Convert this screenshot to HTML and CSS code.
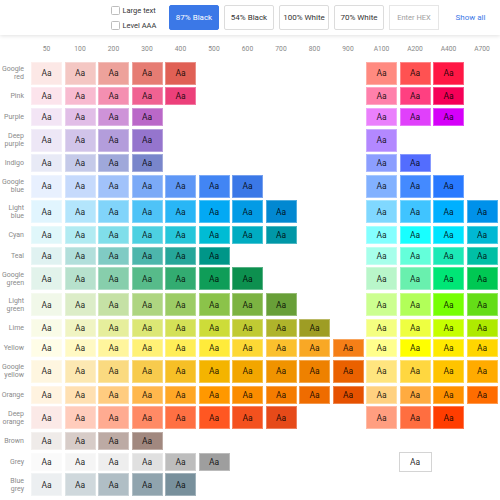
FILE: index.html
```html
<!DOCTYPE html>
<html>
  <head>
    <title>Color Tool</title>
    <link rel="stylesheet" href="styles.css">
  </head>

  <body>
    <div id="toolbar">
      <div class="checks">
        <label class="check"><span class="box"></span>Large text</label>
        <label class="check"><span class="box"></span>Level AAA</label>
      </div>
      <button class="btn active" type="button">87% Black</button>
      <button class="btn" type="button">54% Black</button>
      <button class="btn" type="button">100% White</button>
      <button class="btn" type="button">70% White</button>
      <div class="hex">Enter HEX</div>
      <a class="show-all" href="#">Show all</a>
    </div>

    <div id="palette">
      <div class="row head">
        <div></div>
        <div>50</div><div>100</div><div>200</div><div>300</div><div>400</div><div>500</div><div>600</div>
        <div>700</div><div>800</div><div>900</div><div>A100</div><div>A200</div><div>A400</div><div>A700</div>
      </div>

      <div class="row tall">
        <div class="name">Google<br>red</div>
        <div class="sw" style="background:#fce8e6">Aa</div>
        <div class="sw" style="background:#f4c7c3">Aa</div>
        <div class="sw" style="background:#eda29b">Aa</div>
        <div class="sw" style="background:#e67c73">Aa</div>
        <div class="sw" style="background:#e06055">Aa</div>
        <div class="sw a100" style="background:#ff8a80">Aa</div>
        <div class="sw" style="background:#ff5252">Aa</div>
        <div class="sw" style="background:#ff1744">Aa</div>
      </div>

      <div class="row">
        <div class="name">Pink</div>
        <div class="sw" style="background:#fce4ec">Aa</div>
        <div class="sw" style="background:#f8bbd0">Aa</div>
        <div class="sw" style="background:#f48fb1">Aa</div>
        <div class="sw" style="background:#f06292">Aa</div>
        <div class="sw" style="background:#ec407a">Aa</div>
        <div class="sw a100" style="background:#ff80ab">Aa</div>
        <div class="sw" style="background:#ff4081">Aa</div>
        <div class="sw" style="background:#f50057">Aa</div>
      </div>

      <div class="row">
        <div class="name">Purple</div>
        <div class="sw" style="background:#f3e5f5">Aa</div>
        <div class="sw" style="background:#e1bee7">Aa</div>
        <div class="sw" style="background:#ce93d8">Aa</div>
        <div class="sw" style="background:#ba68c8">Aa</div>
        <div class="sw a100" style="background:#ea80fc">Aa</div>
        <div class="sw" style="background:#e040fb">Aa</div>
        <div class="sw" style="background:#d500f9">Aa</div>
      </div>

      <div class="row tall">
        <div class="name">Deep<br>purple</div>
        <div class="sw" style="background:#ede7f6">Aa</div>
        <div class="sw" style="background:#d1c4e9">Aa</div>
        <div class="sw" style="background:#b39ddb">Aa</div>
        <div class="sw" style="background:#9575cd">Aa</div>
        <div class="sw a100" style="background:#b388ff">Aa</div>
      </div>

      <div class="row">
        <div class="name">Indigo</div>
        <div class="sw" style="background:#e8eaf6">Aa</div>
        <div class="sw" style="background:#c5cae9">Aa</div>
        <div class="sw" style="background:#9fa8da">Aa</div>
        <div class="sw" style="background:#7986cb">Aa</div>
        <div class="sw a100" style="background:#8c9eff">Aa</div>
        <div class="sw" style="background:#536dfe">Aa</div>
      </div>

      <div class="row tall">
        <div class="name">Google<br>blue</div>
        <div class="sw" style="background:#e8f0fe">Aa</div>
        <div class="sw" style="background:#c6dafc">Aa</div>
        <div class="sw" style="background:#a1c2fa">Aa</div>
        <div class="sw" style="background:#7baaf7">Aa</div>
        <div class="sw" style="background:#5e97f6">Aa</div>
        <div class="sw" style="background:#4285f4">Aa</div>
        <div class="sw" style="background:#3b78e7">Aa</div>
        <div class="sw a100" style="background:#82b1ff">Aa</div>
        <div class="sw" style="background:#448aff">Aa</div>
        <div class="sw" style="background:#2979ff">Aa</div>
      </div>

      <div class="row tall">
        <div class="name">Light<br>blue</div>
        <div class="sw" style="background:#e1f5fe">Aa</div>
        <div class="sw" style="background:#b3e5fc">Aa</div>
        <div class="sw" style="background:#81d4fa">Aa</div>
        <div class="sw" style="background:#4fc3f7">Aa</div>
        <div class="sw" style="background:#29b6f6">Aa</div>
        <div class="sw" style="background:#03a9f4">Aa</div>
        <div class="sw" style="background:#039be5">Aa</div>
        <div class="sw" style="background:#0288d1">Aa</div>
        <div class="sw a100" style="background:#80d8ff">Aa</div>
        <div class="sw" style="background:#40c4ff">Aa</div>
        <div class="sw" style="background:#00b0ff">Aa</div>
        <div class="sw" style="background:#0091ea">Aa</div>
      </div>

      <div class="row">
        <div class="name">Cyan</div>
        <div class="sw" style="background:#e0f7fa">Aa</div>
        <div class="sw" style="background:#b2ebf2">Aa</div>
        <div class="sw" style="background:#80deea">Aa</div>
        <div class="sw" style="background:#4dd0e1">Aa</div>
        <div class="sw" style="background:#26c6da">Aa</div>
        <div class="sw" style="background:#00bcd4">Aa</div>
        <div class="sw" style="background:#00acc1">Aa</div>
        <div class="sw" style="background:#0097a7">Aa</div>
        <div class="sw a100" style="background:#84ffff">Aa</div>
        <div class="sw" style="background:#18ffff">Aa</div>
        <div class="sw" style="background:#00e5ff">Aa</div>
        <div class="sw" style="background:#00b8d4">Aa</div>
      </div>

      <div class="row">
        <div class="name">Teal</div>
        <div class="sw" style="background:#e0f2f1">Aa</div>
        <div class="sw" style="background:#b2dfdb">Aa</div>
        <div class="sw" style="background:#80cbc4">Aa</div>
        <div class="sw" style="background:#4db6ac">Aa</div>
        <div class="sw" style="background:#26a69a">Aa</div>
        <div class="sw" style="background:#009688">Aa</div>
        <div class="sw a100" style="background:#a7ffeb">Aa</div>
        <div class="sw" style="background:#64ffda">Aa</div>
        <div class="sw" style="background:#1de9b6">Aa</div>
        <div class="sw" style="background:#00bfa5">Aa</div>
      </div>

      <div class="row tall">
        <div class="name">Google<br>green</div>
        <div class="sw" style="background:#e2f3eb">Aa</div>
        <div class="sw" style="background:#b7e1cd">Aa</div>
        <div class="sw" style="background:#87ceac">Aa</div>
        <div class="sw" style="background:#57bb8a">Aa</div>
        <div class="sw" style="background:#33ac71">Aa</div>
        <div class="sw" style="background:#0f9d58">Aa</div>
        <div class="sw" style="background:#0d904f">Aa</div>
        <div class="sw a100" style="background:#b9f6ca">Aa</div>
        <div class="sw" style="background:#69f0ae">Aa</div>
        <div class="sw" style="background:#00e676">Aa</div>
        <div class="sw" style="background:#00c853">Aa</div>
      </div>

      <div class="row tall">
        <div class="name">Light<br>green</div>
        <div class="sw" style="background:#f1f8e9">Aa</div>
        <div class="sw" style="background:#dcedc8">Aa</div>
        <div class="sw" style="background:#c5e1a5">Aa</div>
        <div class="sw" style="background:#aed581">Aa</div>
        <div class="sw" style="background:#9ccc65">Aa</div>
        <div class="sw" style="background:#8bc34a">Aa</div>
        <div class="sw" style="background:#7cb342">Aa</div>
        <div class="sw" style="background:#689f38">Aa</div>
        <div class="sw a100" style="background:#ccff90">Aa</div>
        <div class="sw" style="background:#b2ff59">Aa</div>
        <div class="sw" style="background:#76ff03">Aa</div>
        <div class="sw" style="background:#64dd17">Aa</div>
      </div>

      <div class="row">
        <div class="name">Lime</div>
        <div class="sw" style="background:#f9fbe7">Aa</div>
        <div class="sw" style="background:#f0f4c3">Aa</div>
        <div class="sw" style="background:#e6ee9c">Aa</div>
        <div class="sw" style="background:#dce775">Aa</div>
        <div class="sw" style="background:#d4e157">Aa</div>
        <div class="sw" style="background:#cddc39">Aa</div>
        <div class="sw" style="background:#c0ca33">Aa</div>
        <div class="sw" style="background:#afb42b">Aa</div>
        <div class="sw" style="background:#9e9d24">Aa</div>
        <div class="sw a100" style="background:#f4ff81">Aa</div>
        <div class="sw" style="background:#eeff41">Aa</div>
        <div class="sw" style="background:#c6ff00">Aa</div>
        <div class="sw" style="background:#aeea00">Aa</div>
      </div>

      <div class="row">
        <div class="name">Yellow</div>
        <div class="sw" style="background:#fffde7">Aa</div>
        <div class="sw" style="background:#fff9c4">Aa</div>
        <div class="sw" style="background:#fff59d">Aa</div>
        <div class="sw" style="background:#fff176">Aa</div>
        <div class="sw" style="background:#ffee58">Aa</div>
        <div class="sw" style="background:#ffeb3b">Aa</div>
        <div class="sw" style="background:#fdd835">Aa</div>
        <div class="sw" style="background:#fbc02d">Aa</div>
        <div class="sw" style="background:#f9a825">Aa</div>
        <div class="sw" style="background:#f57f17">Aa</div>
        <div class="sw" style="background:#ffff8d">Aa</div>
        <div class="sw" style="background:#ffff00">Aa</div>
        <div class="sw" style="background:#ffea00">Aa</div>
        <div class="sw" style="background:#ffd600">Aa</div>
      </div>

      <div class="row tall">
        <div class="name">Google<br>yellow</div>
        <div class="sw" style="background:#fef6e0">Aa</div>
        <div class="sw" style="background:#fce8b2">Aa</div>
        <div class="sw" style="background:#fada80">Aa</div>
        <div class="sw" style="background:#f7cb4d">Aa</div>
        <div class="sw" style="background:#f6bf26">Aa</div>
        <div class="sw" style="background:#f4b400">Aa</div>
        <div class="sw" style="background:#f2a600">Aa</div>
        <div class="sw" style="background:#f09300">Aa</div>
        <div class="sw" style="background:#ee8100">Aa</div>
        <div class="sw" style="background:#ea6100">Aa</div>
        <div class="sw" style="background:#ffe57f">Aa</div>
        <div class="sw" style="background:#ffd740">Aa</div>
        <div class="sw" style="background:#ffc400">Aa</div>
        <div class="sw" style="background:#ffab00">Aa</div>
      </div>

      <div class="row">
        <div class="name">Orange</div>
        <div class="sw" style="background:#fff3e0">Aa</div>
        <div class="sw" style="background:#ffe0b2">Aa</div>
        <div class="sw" style="background:#ffcc80">Aa</div>
        <div class="sw" style="background:#ffb74d">Aa</div>
        <div class="sw" style="background:#ffa726">Aa</div>
        <div class="sw" style="background:#ff9800">Aa</div>
        <div class="sw" style="background:#fb8c00">Aa</div>
        <div class="sw" style="background:#f57c00">Aa</div>
        <div class="sw" style="background:#ef6c00">Aa</div>
        <div class="sw" style="background:#e65100">Aa</div>
        <div class="sw" style="background:#ffd180">Aa</div>
        <div class="sw" style="background:#ffab40">Aa</div>
        <div class="sw" style="background:#ff9100">Aa</div>
        <div class="sw" style="background:#ff6d00">Aa</div>
      </div>

      <div class="row tall">
        <div class="name">Deep<br>orange</div>
        <div class="sw" style="background:#fbe9e7">Aa</div>
        <div class="sw" style="background:#ffccbc">Aa</div>
        <div class="sw" style="background:#ffab91">Aa</div>
        <div class="sw" style="background:#ff8a65">Aa</div>
        <div class="sw" style="background:#ff7043">Aa</div>
        <div class="sw" style="background:#ff5722">Aa</div>
        <div class="sw" style="background:#f4511e">Aa</div>
        <div class="sw" style="background:#e64a19">Aa</div>
        <div class="sw a100" style="background:#ff9e80">Aa</div>
        <div class="sw" style="background:#ff6e40">Aa</div>
        <div class="sw" style="background:#ff3d00">Aa</div>
      </div>

      <div class="row">
        <div class="name">Brown</div>
        <div class="sw" style="background:#efebe9">Aa</div>
        <div class="sw" style="background:#d7ccc8">Aa</div>
        <div class="sw" style="background:#bcaaa4">Aa</div>
        <div class="sw" style="background:#a1887f">Aa</div>
      </div>

      <div class="row">
        <div class="name">Grey</div>
        <div class="sw" style="background:#fafafa">Aa</div>
        <div class="sw" style="background:#f5f5f5">Aa</div>
        <div class="sw" style="background:#eeeeee">Aa</div>
        <div class="sw" style="background:#e0e0e0">Aa</div>
        <div class="sw" style="background:#bdbdbd">Aa</div>
        <div class="sw" style="background:#9e9e9e">Aa</div>
        <div class="sw a200 white">Aa</div>
      </div>

      <div class="row tall">
        <div class="name">Blue<br>grey</div>
        <div class="sw" style="background:#eceff1">Aa</div>
        <div class="sw" style="background:#cfd8dc">Aa</div>
        <div class="sw" style="background:#b0bec5">Aa</div>
        <div class="sw" style="background:#90a4ae">Aa</div>
        <div class="sw" style="background:#78909c">Aa</div>
      </div>
    </div>
  </body>
</html>
```

FILE: styles.css
```css
body {
  margin: 0;
  background: #fff;
  font-family: Roboto, 'Liberation Sans', sans-serif;
  color: #333;
}

/* top bar */

#toolbar {
  height: 35px;
  display: flex;
  align-items: center;
  padding-left: 111px;
  box-shadow: 0 1px 4px rgba(0, 0, 0, 0.12);
  position: relative;
}

.checks {
  width: 58px;
  display: flex;
  flex-direction: column;
  gap: 5px;
}

.check {
  display: flex;
  align-items: center;
  height: 10px;
  font-size: 7.5px;
  color: #333;
  white-space: nowrap;
}

.box {
  width: 7px;
  height: 7px;
  border: 1px solid #bdbdbd;
  border-radius: 1.5px;
  margin-right: 2.5px;
  flex: none;
}

.btn {
  width: 50px;
  height: 25px;
  margin-right: 5px;
  padding: 0;
  border: 1px solid #dcdcdc;
  border-radius: 2px;
  background: #fff;
  color: #333;
  font-family: Roboto, 'Liberation Sans', sans-serif;
  font-size: 8px;
}

.btn.active {
  background: #3b78e7;
  border-color: #3b78e7;
  color: #fff;
}

.hex {
  width: 50px;
  height: 25px;
  box-sizing: border-box;
  border: 1px solid #e6e6e6;
  display: flex;
  align-items: center;
  justify-content: center;
  font-size: 7.5px;
  color: #9e9e9e;
}

.show-all {
  margin-left: 16.5px;
  font-size: 8px;
  color: #3b78e7;
  text-decoration: none;
}

/* palette grid */

#palette {
  margin-top: 8px;
  display: flex;
  flex-direction: column;
  gap: 2.65px;
}

.row {
  display: grid;
  grid-template-columns: 28.5px repeat(14, 31px);
  column-gap: 2.5px;
  height: 18px;
}

.row.tall {
  height: 23px;
}

.row.head {
  height: 16px;
  font-size: 6.7px;
  color: #888;
  text-align: center;
  line-height: 12px;
}

.name {
  display: flex;
  align-items: center;
  justify-content: flex-end;
  padding-right: 4.5px;
  font-size: 7px;
  line-height: 8px;
  color: #8a8a8a;
  text-align: right;
}

.sw {
  display: flex;
  align-items: center;
  justify-content: center;
  font-size: 8.5px;
  color: rgba(0, 0, 0, 0.87);
  box-shadow: inset 0 0 0 1px rgba(255, 255, 255, 0.3);
}

.sw.a100 {
  grid-column-start: 12;
}

.sw.a200 {
  grid-column-start: 13;
}

.sw.white {
  background: #fff;
  box-shadow: 0 0 0 1px #d4d4d4;
}
```
